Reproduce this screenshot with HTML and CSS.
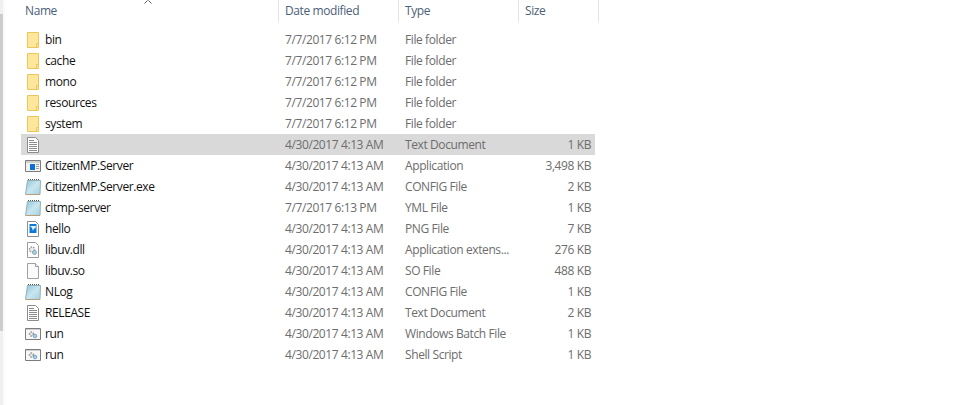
FILE: index.html
```html
<!doctype html>
<html>

<head>
    <title>Files</title>
    <link rel="stylesheet" href="styles.css">
</head>

<body>
    <svg class="defs" width="0" height="0">
        <defs>
            <linearGradient id="padFill" x1="0" y1="0" x2="1" y2="1">
                <stop offset="0" stop-color="#8fc6d8"/>
                <stop offset="0.5" stop-color="#c9e6ee"/>
                <stop offset="1" stop-color="#a5d2df"/>
            </linearGradient>
        </defs>
        <symbol id="folder" viewBox="0 0 16 16">
            <path d="M2.5.5h11v15h-11z" fill="#fee79a" stroke="#ecc65c"/>
            <path d="M11.5 15.5v-4h2" fill="none" stroke="#ecc65c"/>
        </symbol>
        <symbol id="textdoc" viewBox="0 0 16 16">
            <path d="M2.5.5h8l3 3v12h-11z" fill="#fff" stroke="#8c8c8c"/>
            <path d="M4 3.5h5M4 5.5h8M4 7.5h8M4 9.5h8M4 11.5h8M4 13.5h8" stroke="#8c8c8c"/>
        </symbol>
        <symbol id="app" viewBox="0 0 16 12">
            <path d="M.5.5h15v11H.5z" fill="#f2f2f2" stroke="#7c7c7c"/>
            <path d="M1 1h14v2H1z" fill="#d0d0d0"/>
            <path d="M5 4h5v6H5z" fill="#0a6fd6"/>
            <path d="M11 4.5h3M11 6.5h3M11 8.5h3" stroke="#a0a0a0"/>
        </symbol>
        <symbol id="notepad" viewBox="0 0 16 16">
            <path d="M2.5 1.5h13l-.5 14H.5z" fill="url(#padFill)" stroke="#8fb0b8"/>
            <path d="M3 .5h12" stroke="#555" stroke-dasharray="1 1"/>
            <path d="M1 15.5h14" stroke="#b79f78"/>
        </symbol>
        <symbol id="image" viewBox="0 0 16 16">
            <path d="M2.5.5h8l3 3v12h-11z" fill="#fff" stroke="#8c8c8c"/>
            <path d="M4.500 3h7v9h-7z" fill="#0c78d8"/>
            <path d="M5 5h6l-1 3-1-1-1 3-1-3z" fill="#e8f4ff"/>
        </symbol>
        <symbol id="dll" viewBox="0 0 16 16">
            <path d="M2.5.5h8l3 3v12h-11z" fill="#fff" stroke="#9a9a9a"/>
            <circle cx="7" cy="7.5" r="2.5" fill="#eee" stroke="#9a9a9a" stroke-width="1.5" stroke-dasharray="1.5 1"/>
            <circle cx="9.500" cy="10.500" r="2" fill="#a8cfe8" stroke="#8aa"/>
        </symbol>
        <symbol id="blank" viewBox="0 0 16 16">
            <path d="M2.5.5h8l3 3v12h-11z" fill="#fbfbfb" stroke="#a0a0a0"/>
            <path d="M10.5.5v3h3" fill="#eee" stroke="#a0a0a0"/>
        </symbol>
        <symbol id="script" viewBox="0 0 16 12">
            <path d="M.5.5h15v11H.5z" fill="#f7f7f7" stroke="#7c7c7c"/>
            <path d="M1 1h14v1H1z" fill="#d0d0d0"/>
            <circle cx="6.5" cy="6" r="2" fill="#e8e8e8" stroke="#999" stroke-width="1.5" stroke-dasharray="1.5 1"/>
            <circle cx="10" cy="8" r="1.8" fill="#a8cfe8" stroke="#7fa6c0"/>
        </symbol>
    </svg>

    <div class="scrollTrack">
        <div class="scrollThumb"></div>
    </div>

    <div class="explorer">
        <svg class="closeMark" width="8" height="4" viewBox="0 0 8 4">
            <path d="M.5 3.5l3-3M7.5 3.5l-3-3" stroke="#555" fill="none"/>
        </svg>

        <div class="headerRow">
            <div class="headCell nameHead">Name</div>
            <div class="headCell">Date modified</div>
            <div class="headCell">Type</div>
            <div class="headCell">Size</div>
        </div>

        <ul class="fileList">
            <li class="fileRow">
                <span class="nameCell"><svg class="icon"><use href="#folder"/></svg>bin</span>
                <span>7/7/2017 6:12 PM</span><span>File folder</span><span class="sizeCell"></span>
            </li>
            <li class="fileRow">
                <span class="nameCell"><svg class="icon"><use href="#folder"/></svg>cache</span>
                <span>7/7/2017 6:12 PM</span><span>File folder</span><span class="sizeCell"></span>
            </li>
            <li class="fileRow">
                <span class="nameCell"><svg class="icon"><use href="#folder"/></svg>mono</span>
                <span>7/7/2017 6:12 PM</span><span>File folder</span><span class="sizeCell"></span>
            </li>
            <li class="fileRow">
                <span class="nameCell"><svg class="icon"><use href="#folder"/></svg>resources</span>
                <span>7/7/2017 6:12 PM</span><span>File folder</span><span class="sizeCell"></span>
            </li>
            <li class="fileRow">
                <span class="nameCell"><svg class="icon"><use href="#folder"/></svg>system</span>
                <span>7/7/2017 6:12 PM</span><span>File folder</span><span class="sizeCell"></span>
            </li>
            <li class="fileRow selected">
                <span class="nameCell"><svg class="icon"><use href="#textdoc"/></svg></span>
                <span>4/30/2017 4:13 AM</span><span>Text Document</span><span class="sizeCell">1 KB</span>
            </li>
            <li class="fileRow">
                <span class="nameCell"><svg class="icon"><use href="#app"/></svg>CitizenMP.Server</span>
                <span>4/30/2017 4:13 AM</span><span>Application</span><span class="sizeCell">3,498 KB</span>
            </li>
            <li class="fileRow">
                <span class="nameCell"><svg class="icon"><use href="#notepad"/></svg>CitizenMP.Server.exe</span>
                <span>4/30/2017 4:13 AM</span><span>CONFIG File</span><span class="sizeCell">2 KB</span>
            </li>
            <li class="fileRow">
                <span class="nameCell"><svg class="icon"><use href="#notepad"/></svg>citmp-server</span>
                <span>7/7/2017 6:13 PM</span><span>YML File</span><span class="sizeCell">1 KB</span>
            </li>
            <li class="fileRow">
                <span class="nameCell"><svg class="icon"><use href="#image"/></svg>hello</span>
                <span>4/30/2017 4:13 AM</span><span>PNG File</span><span class="sizeCell">7 KB</span>
            </li>
            <li class="fileRow">
                <span class="nameCell"><svg class="icon"><use href="#dll"/></svg>libuv.dll</span>
                <span>4/30/2017 4:13 AM</span><span>Application extens...</span><span class="sizeCell">276 KB</span>
            </li>
            <li class="fileRow">
                <span class="nameCell"><svg class="icon"><use href="#blank"/></svg>libuv.so</span>
                <span>4/30/2017 4:13 AM</span><span>SO File</span><span class="sizeCell">488 KB</span>
            </li>
            <li class="fileRow">
                <span class="nameCell"><svg class="icon"><use href="#notepad"/></svg>NLog</span>
                <span>4/30/2017 4:13 AM</span><span>CONFIG File</span><span class="sizeCell">1 KB</span>
            </li>
            <li class="fileRow">
                <span class="nameCell"><svg class="icon"><use href="#textdoc"/></svg>RELEASE</span>
                <span>4/30/2017 4:13 AM</span><span>Text Document</span><span class="sizeCell">2 KB</span>
            </li>
            <li class="fileRow">
                <span class="nameCell"><svg class="icon"><use href="#script"/></svg>run</span>
                <span>4/30/2017 4:13 AM</span><span>Windows Batch File</span><span class="sizeCell">1 KB</span>
            </li>
            <li class="fileRow">
                <span class="nameCell"><svg class="icon"><use href="#script"/></svg>run</span>
                <span>4/30/2017 4:13 AM</span><span>Shell Script</span><span class="sizeCell">1 KB</span>
            </li>
        </ul>
    </div>
</body>

</html>
```

FILE: styles.css
```css
* {
    margin: 0;
    padding: 0;
    box-sizing: border-box;
}

html,
body {
    height: 405px;
    overflow: hidden;
}

body {
    font: 12px "Open Sans", "Noto Sans", Arial, sans-serif;
    letter-spacing: -0.4px;
    background-color: white;
    display: flex;
}

.defs {
    position: absolute;
}

.scrollTrack {
    width: 5px;
    height: 405px;
    background-color: #f0f0f0;
    border-right: solid 2px #fafafa;
}

.scrollThumb {
    height: 317px;
    margin-top: 14px;
    background-color: #cdcdcd;
}

.explorer {
    position: relative;
    padding-left: 16px;
}

.closeMark {
    position: absolute;
    left: 139px;
    top: 0;
}

.headerRow {
    display: grid;
    grid-template-columns: 258px 120px 120px 80px;
    height: 22px;
}

.headCell {
    color: #4c607a;
    line-height: 21px;
    padding-left: 6px;
    border-right: solid 1px #e5e5e5;
}

.nameHead {
    padding-left: 4px;
}

.fileList {
    list-style: none;
    margin-top: 7px;
}

.fileRow {
    display: grid;
    grid-template-columns: 258px 120px 120px 76px;
    width: 574px;
    height: 21px;
    line-height: 21px;
    color: #6d6d6d;
}

.fileRow span {
    padding-left: 6px;
    white-space: nowrap;
}

.fileRow .nameCell {
    display: flex;
    align-items: center;
    padding-left: 4px;
    color: #111;
}

.fileRow .sizeCell {
    padding-right: 4px;
    text-align: right;
}

.selected {
    background-color: #d9d9d9;
}

.icon {
    width: 16px;
    height: 16px;
    margin-right: 4px;
    flex: none;
}
```
